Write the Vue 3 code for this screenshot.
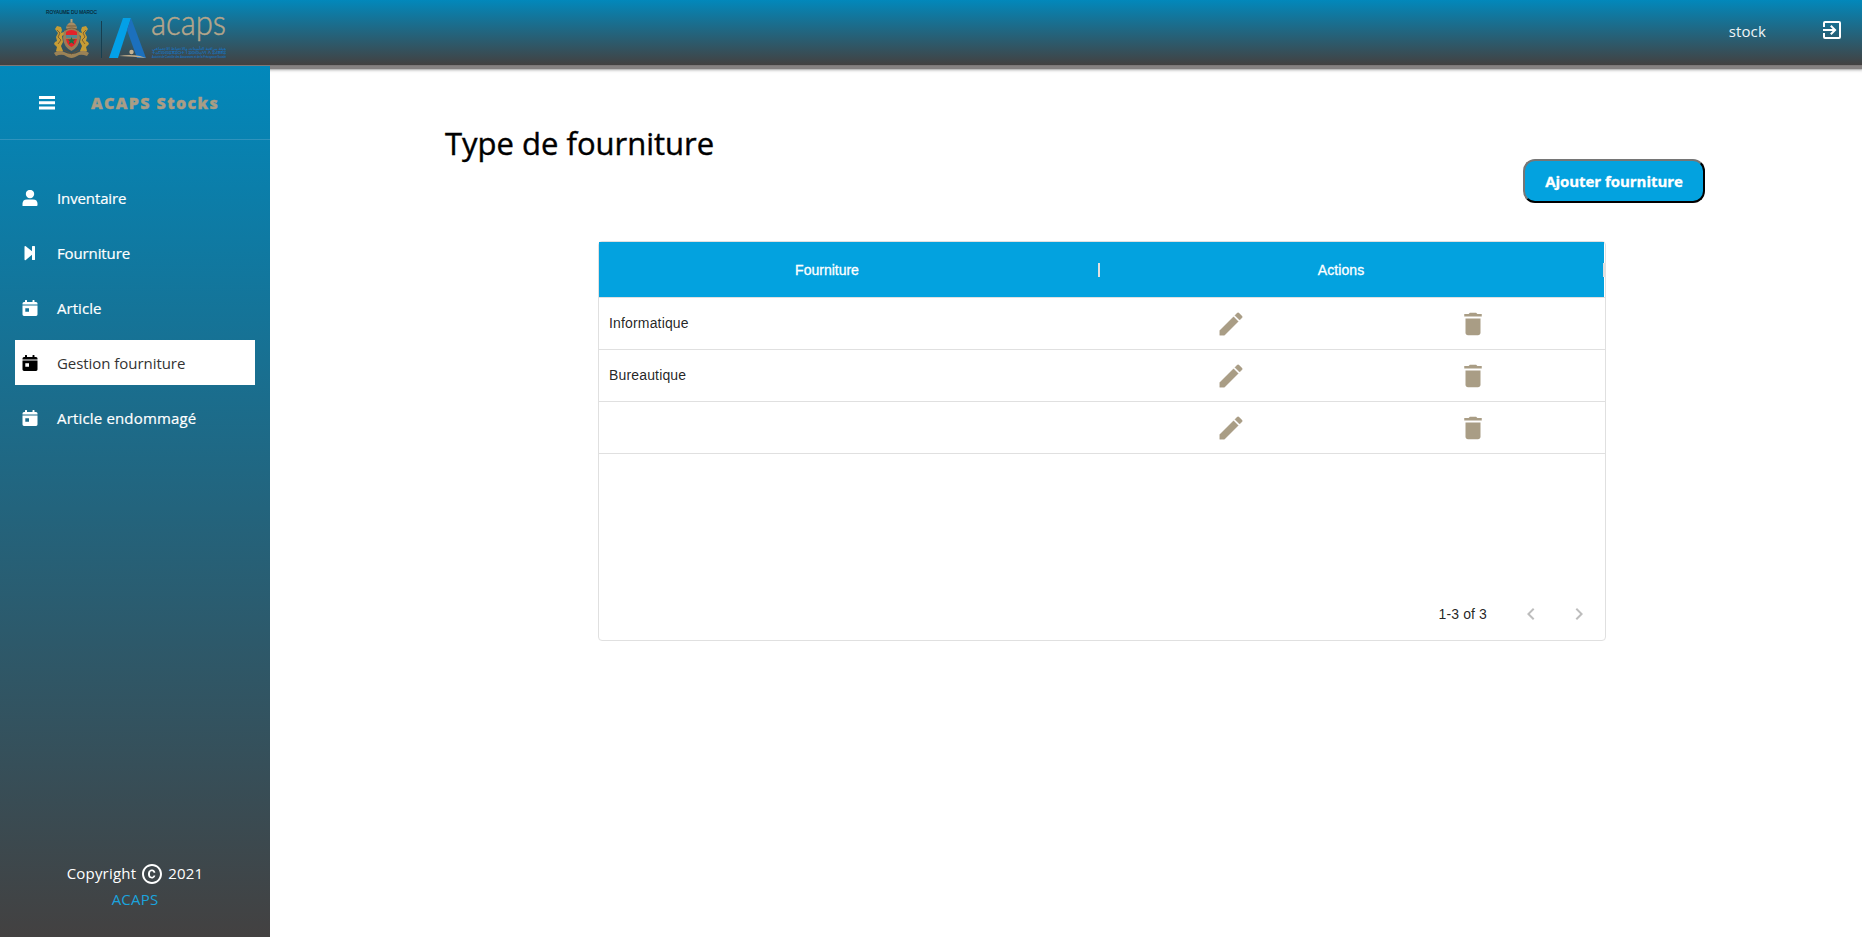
<script setup>
const menu = [
  { label: 'Inventaire', icon: 'user', spacing: -0.12 },
  { label: 'Fourniture', icon: 'next', spacing: -0.12 },
  { label: 'Article', icon: 'calendar', spacing: 0.05 },
  { label: 'Gestion fourniture', icon: 'calendar', spacing: -0.05, active: true },
  { label: 'Article endommagé', icon: 'calendar', spacing: 0.17 },
]
const rows = ['Informatique', 'Bureautique', '']
</script>

<template>
  <div class="page">
    <header class="topbar">
      <svg class="logo" width="200" height="64" viewBox="40 0 200 64">
        <text x="46" y="14" class="kingdom" textLength="51" lengthAdjust="spacingAndGlyphs">ROYAUME DU MAROC</text>
        <g fill="#c79d35">
          <path d="M55 29l2-3 4 1 1 3-1 3 3-1 1 2-3 2 1 6-2 4 2 5-3 2-4-2 1-4-3-3 1-2 2-1-1-4 2-4z" />
          <path d="M88 29l-2-3-4 1-1 3 1 3-3-1-1 2 3 2-1 6 2 4-2 5 3 2 4-2-1-4 3-3-1-2-2-1 1-4-2-4z" />
          <path d="M66 28q1-5 5.500-6q4.500 1 5.500 6l-2 2h-7z" fill="#a68c64" />
          <path d="M70.500 19h2v3h-2z" fill="#b7a27b" />
          <path d="M54 53q5-4 10-1q4 2 7.500 2q4 0 7.500-2q5-3 10 1l-2 3q-5-2-8-1q-5 3-7.500 3q-3 0-7.500-3q-4-1-8 1z" fill="#9b8256" />
        </g>
        <path d="M64 31q7-5 15 0l1 7q-1 9-8.500 13q-8-4-8.500-13z" fill="#9d7b55" />
        <path d="M66 32q5.500-4 11 0v3H66zM66 39h11q-1 6-5.500 8q-4.500-2-5.500-8z" fill="#e3222a" />
        <path d="M66 35h11v3H66z" fill="#588690" />
        <path d="M71.500 37l1 2.500h3l-2.200 1.700.9 3-2.700-1.800-2.700 1.800.9-3-2.200-1.700h3z" fill="#187344" />
        <g stroke="#6b5130" fill="none" stroke-width=".8">
          <path d="M57 30l3 3-2 4 3 3-3 4M86 30l-3 3 2 4-3 3 3 4M64 50l7.500 4 7.500-4M67 26h9M65 30q7-4 13 0" />
        </g>
        <path d="M101.500 21v37" stroke="#173f50" />
        <path d="M123 18h8L118 58h-9z" fill="#03a0e7" />
        <path d="M131 18l15 40h-9L127 30z" fill="#1c70bd" />
        <path d="M119 56q10-2 21 0l6 2q-12-1.500-27-2z" fill="#c0ad8d" />
        <circle cx="131.500" cy="52" r="2.200" fill="#c5b394" />
        <text x="151" y="35" class="brand" textLength="75" lengthAdjust="spacingAndGlyphs">acaps</text>
        <g class="tag">
          <text x="152" y="50" textLength="74" lengthAdjust="spacingAndGlyphs">هيئة مراقبة التأمينات والاحتياط الاجتماعي</text>
          <text x="152" y="54" textLength="74" lengthAdjust="spacingAndGlyphs">ⵜⴰⵎⵙⵙⵓⴳⵓⵔⵜ ⵏ ⵓⵙⵙⴰⵖⵏ ⴷ ⵓⵃⵟⵟⵓ</text>
          <text x="152" y="58" textLength="74" lengthAdjust="spacingAndGlyphs">Autorité de Contrôle des Assurances et de la Prévoyance Sociale</text>
        </g>
      </svg>
      <div class="account">
        <span class="user">stock</span>
        <svg width="24" height="24" viewBox="0 0 24 24" fill="#fff">
          <path d="M10.090 15.590 11.500 17l5-5-5-5-1.410 1.410L12.670 11H3v2h9.670zM19 3H5a2 2 0 0 0-2 2v4h2V5h14v14H5v-4H3v4a2 2 0 0 0 2 2h14a2 2 0 0 0 2-2V5a2 2 0 0 0-2-2z" />
        </svg>
      </div>
    </header>

    <div class="body">
      <aside class="sidebar">
        <div class="side-head">
          <svg class="burger" width="16" height="14" viewBox="0 0 16 14"><path d="M0 0h16v3H0zM0 5.300h16v3H0zM0 10.600h16v3H0z" fill="#fff" /></svg>
          <span class="side-title">ACAPS Stocks</span>
        </div>
        <nav class="menu">
          <a v-for="m in menu" :key="m.label" class="item" :class="{ active: m.active }">
            <svg class="glyph" width="16" height="16" viewBox="0 0 16 16" fill="currentColor">
              <template v-if="m.icon === 'user'">
                <circle cx="8" cy="4" r="4.200" />
                <path d="M.500 16v-2.200Q.500 9.500 5 9.500h6q4.500 0 4.500 4.300V15q0 1-1 1z" />
              </template>
              <path v-else-if="m.icon === 'next'" d="M2.500 2q0-1.500 1.300-.7L10 6.200V1.500Q10 1 10.700 1h1.600q.7 0 .7.600v12.800q0 .6-.7.600h-1.600q-.7 0-.7-.5V9.800l-6.200 5.200q-1.300.8-1.300-.7z" />
              <path v-else fill-rule="evenodd" d="M3 2V.500Q3 0 3.500 0h1Q5 0 5 .500V2h5.500V.500q0-.5.500-.5h1q.5 0 .5.500V2H14q1.500 0 1.500 1.500V4.400H.500V3.500Q.500 2 2 2zM.500 5.600h15v9q0 1.400-1.400 1.400H2Q.500 16 .500 14.600zM3.300 8.200v3.500H7V8.200z" />
            </svg>
            <span :style="{ letterSpacing: m.spacing + 'px' }">{{ m.label }}</span>
          </a>
        </nav>
        <footer class="foot">
          <div class="copy">
            <span>Copyright</span>
            <svg width="24" height="24" viewBox="0 0 24 24" fill="#fff">
              <path d="M10.080 10.860c.05-.33.160-.62.300-.87s.34-.46.590-.62c.24-.15.540-.22.910-.23.230.01.440.05.630.13.200.09.380.21.520.36s.25.330.34.530.13.420.14.640h1.790c-.02-.47-.11-.9-.28-1.290s-.4-.73-.7-1.010-.66-.5-1.080-.66-.88-.23-1.390-.23c-.65 0-1.220.11-1.700.34s-.88.530-1.200.920-.56.840-.71 1.360S8 11.290 8 11.870v.27c0 .58.080 1.120.23 1.640s.39.970.71 1.350.72.690 1.200.910 1.050.34 1.700.34c.47 0 .91-.08 1.320-.23s.77-.36 1.080-.63.560-.58.740-.94.290-.74.300-1.150h-1.790c-.01.210-.06.400-.15.580s-.21.330-.36.460-.32.230-.52.300c-.19.070-.39.090-.6.100-.36-.01-.66-.08-.89-.23-.25-.16-.45-.37-.59-.62s-.25-.55-.3-.88-.08-.67-.08-1v-.27c0-.35.030-.68.080-1.010zM12 2C6.480 2 2 6.480 2 12s4.480 10 10 10 10-4.480 10-10S17.520 2 12 2zm0 18c-4.410 0-8-3.590-8-8s3.590-8 8-8 8 3.590 8 8-3.590 8-8 8z" />
            </svg>
            <span>2021</span>
          </div>
          <a class="acaps">ACAPS</a>
        </footer>
      </aside>

      <main class="content">
        <h1>Type de fourniture</h1>
        <div class="bar"><button class="add">Ajouter fourniture</button></div>
        <section class="grid">
          <div class="thead">
            <div class="th first">Fourniture<i class="sep" /></div>
            <div class="th second">Actions<i class="sep" /></div>
          </div>
          <div v-for="(r, i) in rows" :key="i" class="row">
            <div class="name">{{ r }}</div>
            <div class="cell">
              <svg width="30" height="30" viewBox="0 0 24 24" fill="#a99d85"><path d="M3 17.250V21h3.750L17.810 9.940l-3.750-3.750zM20.710 7.040a1 1 0 0 0 0-1.410l-2.340-2.340a1 1 0 0 0-1.410 0l-1.830 1.830 3.750 3.750z" stroke="#a99d85" stroke-width=".3" stroke-linejoin="round" /></svg>
            </div>
            <div class="cell">
              <svg width="30" height="30" viewBox="0 0 24 24" fill="#a99d85"><path d="M6 19c0 1.100.9 2 2 2h8c1.100 0 2-.9 2-2V7.500H6zM19 4h-3.500l-1-1h-5l-1 1H5v2h14z" /></svg>
            </div>
          </div>
          <div class="pager">
            <span>1-3 of 3</span>
            <svg width="24" height="24" viewBox="0 0 24 24"><path d="M15.410 7.410 14 6l-6 6 6 6 1.410-1.410L10.830 12z" /></svg>
            <svg width="24" height="24" viewBox="0 0 24 24"><path d="M10 6 8.590 7.410 13.170 12l-4.580 4.590L10 18l6-6z" /></svg>
          </div>
        </section>
      </main>
    </div>
  </div>
</template>

<style>
html,
body {
  margin: 0;
  overflow: hidden;
}
</style>

<style scoped>
.page {
  height: 937px;
  display: flex;
  flex-direction: column;
  background: #fff;
  color: #000;
  font-family: 'Open Sans', 'Noto Sans', sans-serif;
}
.topbar {
  height: 65px;
  flex: none;
  display: flex;
  justify-content: space-between;
  background: linear-gradient(#0288bb, #434141);
  border-bottom: 1px solid #7d7979;
  box-shadow: 0 2px 1px 1px #858181, 0 3px 3px 1px #aaa;
}
.logo {
  margin-left: 40px;
  overflow: visible;
}
.kingdom {
  font: 6px 'Liberation Sans', sans-serif;
  fill: #0b2431;
  stroke: #0b2431;
  stroke-width: 0.15px;
}
.brand {
  font: 300 35px Lato, sans-serif;
  fill: #b5a68b;
  stroke: #b5a68b;
  stroke-width: 0.5px;
}
.tag {
  font: 4px 'Liberation Sans', 'DejaVu Sans', sans-serif;
  fill: #1d6fb5;
  stroke: #1d6fb5;
  stroke-width: 0.15px;
}
.account {
  display: flex;
  align-items: center;
  gap: 54px;
  padding-right: 18px;
  height: 60px;
}
.user {
  color: #f1f5f7;
  font-size: 15px;
  letter-spacing: 0.15px;
  padding-top: 1px;
}
.body {
  flex: 1;
  display: flex;
  min-height: 0;
}
.sidebar {
  width: 270px;
  flex: none;
  position: relative;
  display: flex;
  flex-direction: column;
  background: linear-gradient(#0288bb, #434141);
}
.side-head {
  height: 73px;
  flex: none;
  display: flex;
  align-items: center;
  border-bottom: 1px solid #2f93bd;
}
.burger {
  margin-left: 39px;
}
.side-title {
  margin-left: 36px;
  color: #a99d85;
  font-size: 16px;
  font-weight: 800;
  letter-spacing: 1.4px;
  white-space: nowrap;
  -webkit-text-stroke: 0.4px #a99d85;
}
.menu {
  display: flex;
  flex-direction: column;
  gap: 10px;
  padding: 35px 15px 0;
}
.item {
  height: 45px;
  display: flex;
  align-items: center;
  color: #fff;
  font-size: 15px;
  white-space: nowrap;
}
.item span {
  -webkit-text-stroke: 0.2px #fff;
}
.item.active {
  background: #fff;
  color: #000;
}
.item.active span {
  color: #333;
  -webkit-text-stroke: 0;
}
.glyph {
  margin: 0 19px 0 7px;
}
.foot {
  margin-top: auto;
  height: 78px;
  display: flex;
  flex-direction: column;
  align-items: center;
  color: #fff;
  font-size: 15px;
  letter-spacing: 0.2px;
}
.copy {
  display: flex;
  align-items: center;
  gap: 4px;
  height: 28px;
}
.copy svg {
  margin-top: 2px;
}
.acaps {
  color: #1ba3dd;
  line-height: 24px;
}
.content {
  flex: 1;
  padding-left: 175px;
}
h1 {
  margin: 55px 0 0;
  height: 38px;
  line-height: 44px;
  font-size: 31px;
  font-weight: 500;
  white-space: nowrap;
  -webkit-text-stroke: 0.4px #000;
}
.bar {
  display: flex;
  justify-content: flex-end;
  padding-right: 157px;
}
.add {
  width: 182px;
  height: 44px;
  padding: 0;
  border: 2px outset #000;
  border-color: #767676 #212121 #212121 #767676;
  border-radius: 12px;
  background: #03a2df;
  color: #fff;
  font: 700 15px 'Open Sans', sans-serif;
  letter-spacing: -0.04px;
  -webkit-text-stroke: 0.3px #fff;
  white-space: nowrap;
}
.grid {
  box-sizing: border-box;
  width: 1008px;
  height: 400px;
  margin: 38px 0 0 153px;
  border: 1px solid #e0e0e0;
  border-radius: 4px;
  display: flex;
  flex-direction: column;
  font: 14px 'Liberation Sans', Arial, sans-serif;
  color: rgba(0, 0, 0, 0.87);
}
.thead {
  display: flex;
  height: 55px;
  margin-right: 1px;
  background: #03a2df;
  color: #fff;
  -webkit-text-stroke: 0.3px #fff;
}
.th {
  display: flex;
  align-items: center;
  justify-content: center;
  position: relative;
}
.first {
  width: 501px;
  text-indent: -45px;
}
.second {
  width: 504px;
  text-indent: -22px;
  letter-spacing: 0.1px;
}
.sep {
  position: absolute;
  right: 0;
  top: 21px;
  width: 2px;
  height: 14px;
  background: #e0e0e0;
}
.second .sep {
  right: -1px;
}
.row {
  display: grid;
  grid-template-columns: 511px 242px 1fr;
  height: 51px;
  border-bottom: 1px solid #e0e0e0;
  align-items: center;
}
.thead + .row {
  border-top: 1px solid #e0e0e0;
}
.name {
  padding: 0 0 2px 10px;
  letter-spacing: 0.16px;
}
.cell {
  padding-left: 106px;
  height: 30px;
}
.pager {
  margin-top: auto;
  height: 52px;
  display: flex;
  align-items: center;
  justify-content: flex-end;
  gap: 24px;
  padding-right: 14px;
  fill: #bdbdbd;
}
.pager span {
  margin-right: 8px;
  letter-spacing: 0.13px;
}
</style>
